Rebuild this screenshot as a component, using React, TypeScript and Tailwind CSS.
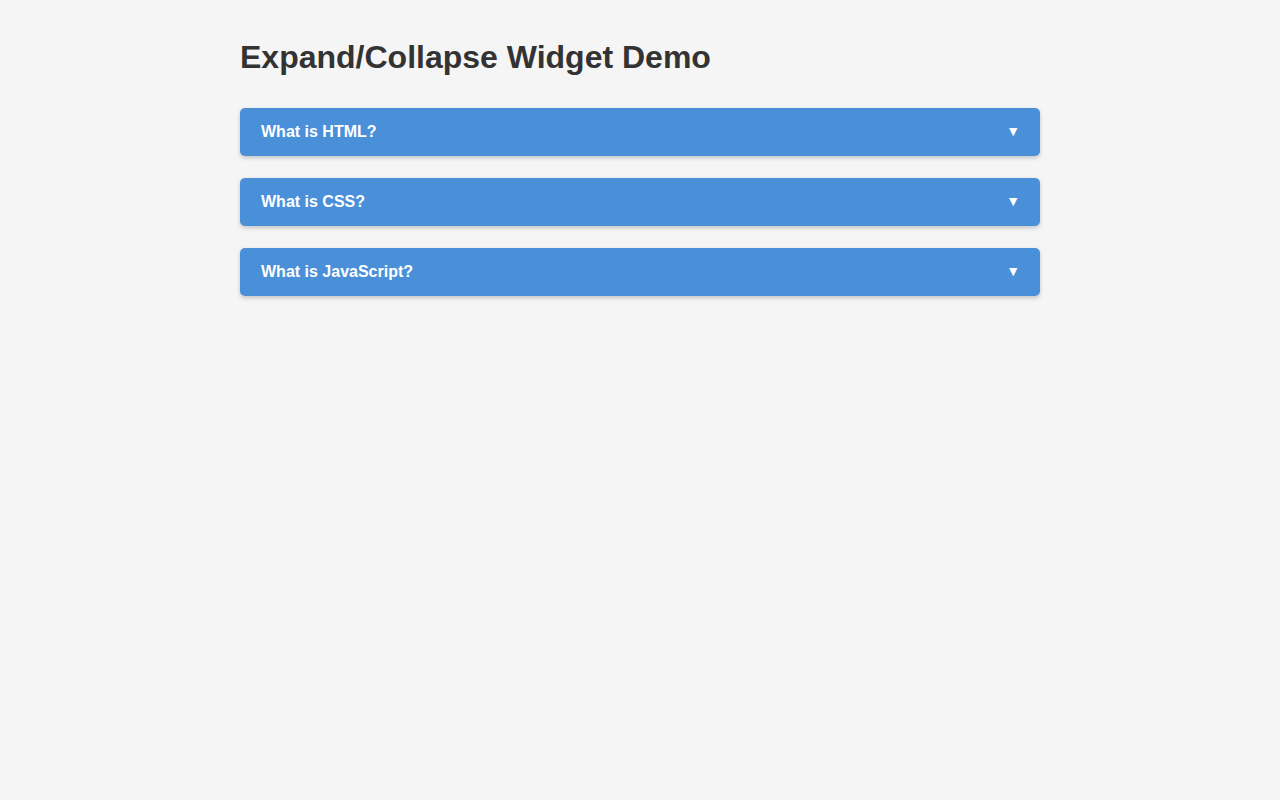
import React from "react";

const items = ["What is HTML?", "What is CSS?", "What is JavaScript?"];

export default function App() {
  return (
    <div
      className="min-h-[800px] bg-[#f5f5f5] p-5 text-[#333]"
      style={{ fontFamily: '"Liberation Sans", Arial, sans-serif' }}
    >
      <div className="mx-auto max-w-[800px]">
        <h1 className="mt-[19px] mb-[32px] text-[32px] font-bold leading-[37px] text-[#333]">
          Expand/Collapse Widget Demo
        </h1>
        <div className="flex flex-col gap-[22px]">
          {items.map((t) => (
            <button
              key={t}
              className="flex h-12 w-full items-center justify-between rounded-[5px] bg-[#4a90d9] pl-[21px] pr-5 text-left text-base font-bold text-white shadow-[0_2px_4px_rgba(0,0,0,0.2)]"
            >
              <span>{t}</span>
              <span className="mb-[3px] text-[14px] leading-none">▼</span>
            </button>
          ))}
        </div>
      </div>
    </div>
  );
}
